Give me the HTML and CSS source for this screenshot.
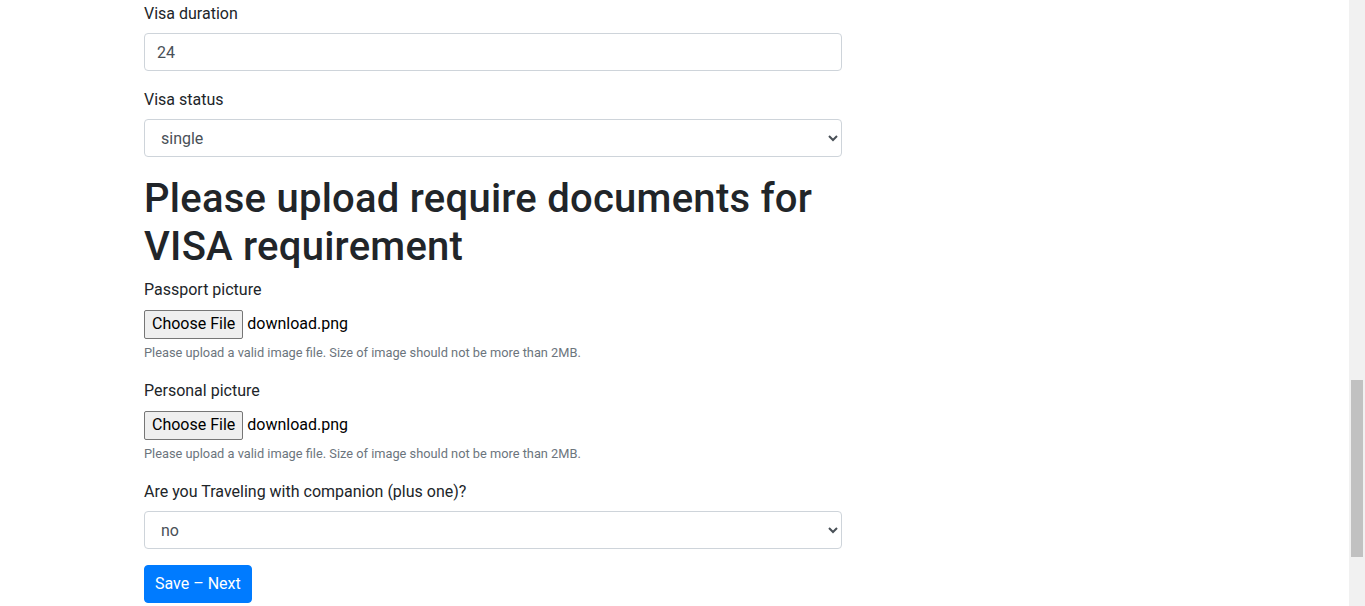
FILE: index.html
```html
<!DOCTYPE html>
<html lang="en">
<head>
<meta charset="utf-8">
<title>Visa form</title>
<link rel="stylesheet" href="styles.css">
</head>
<body>
<main class="page">
  <form class="visa-form">
    <div class="form-group">
      <label class="form-label">Visa duration</label>
      <input class="form-control" type="text" value="24">
    </div>
    <div class="form-group">
      <label class="form-label">Visa status</label>
      <select class="form-control">
        <option>single</option>
        <option>multiple</option>
      </select>
    </div>
    <h1 class="section-title">Please upload require documents for VISA requirement</h1>
    <div class="form-group">
      <label class="form-label">Passport picture</label>
      <div class="file-input">
        <span class="file-button">Choose File</span>
        <span class="file-name">download.png</span>
      </div>
      <small class="form-text">Please upload a valid image file. Size of image should not be more than 2MB.</small>
    </div>
    <div class="form-group">
      <label class="form-label">Personal picture</label>
      <div class="file-input">
        <span class="file-button">Choose File</span>
        <span class="file-name">download.png</span>
      </div>
      <small class="form-text">Please upload a valid image file. Size of image should not be more than 2MB.</small>
    </div>
    <div class="form-group">
      <label class="form-label">Are you Traveling with companion (plus one)?</label>
      <select class="form-control">
        <option>no</option>
        <option>yes</option>
      </select>
    </div>
    <button type="button" class="btn-primary">Save – Next</button>
  </form>
</main>
<div class="scrollbar"><div class="scrollbar-thumb"></div></div>
</body>
</html>
```

FILE: styles.css
```css
html, body {
  margin: 0;
  padding: 0;
  height: 100%;
  overflow: hidden;
  background: #fff;
}
body {
  font-family: Roboto, "Open Sans", sans-serif;
  font-size: 16px;
  line-height: 1.5;
  color: #212529;
}
.page {
  padding: 1px 0 0 144px;
}
.visa-form {
  width: 698px;
}
.form-group {
  margin-bottom: 16px;
}
.form-label {
  display: block;
  margin-bottom: 8px;
  padding-top: 1px;
  height: 23px;
}
.form-control {
  display: block;
  box-sizing: border-box;
  width: 100%;
  height: 38px;
  padding: 6px 12px;
  font-family: inherit;
  font-size: 16px;
  line-height: 1.5;
  color: #495057;
  background: #fff;
  border: 1px solid #ced4da;
  border-radius: 4px;
  margin: 0;
}
.section-title {
  margin: 0 0 6px;
  padding-top: 2px;
  font-size: 40px;
  font-weight: 500;
  line-height: 1.2;
  letter-spacing: 0.25px;
}
.file-input {
  display: flex;
  align-items: center;
  height: 30px;
}
.file-button {
  box-sizing: border-box;
  height: 29px;
  padding: 0 7px;
  display: flex;
  align-items: center;
  background: #efefef;
  border: 1px solid #767676;
  border-radius: 2px;
  color: #000;
  font-size: 16px;
}
.file-name {
  margin-left: 4px;
  color: #000;
}
.form-text {
  display: block;
  margin-top: 4px;
  font-size: 12.8px;
  line-height: 1.5;
  color: #6c757d;
}
.btn-primary {
  display: inline-block;
  height: 38px;
  padding: 6px 10px;
  font-family: inherit;
  font-size: 16px;
  line-height: 1.5;
  color: #fff;
  background: #007bff;
  border: 1px solid #007bff;
  border-radius: 4px;
}
.scrollbar {
  position: fixed;
  top: 0;
  right: 0;
  width: 16px;
  height: 100%;
  background: #f1f1f1;
}
.scrollbar-thumb {
  position: absolute;
  left: 2px;
  right: 2px;
  top: 380px;
  height: 177px;
  background: #c1c1c1;
}
```
